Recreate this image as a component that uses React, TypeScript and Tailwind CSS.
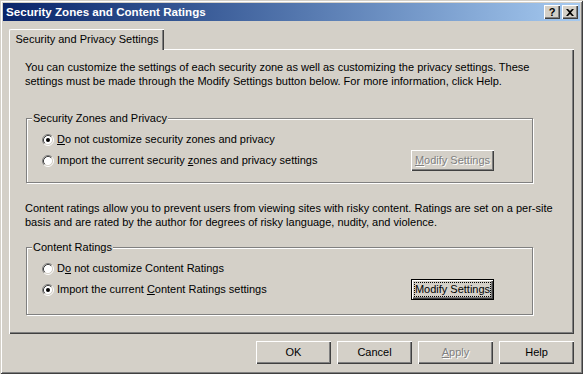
import React from "react";

const font = { fontFamily: '"Liberation Sans", Arial, sans-serif' };

function Radio({ checked }: { checked?: boolean }) {
  return (
    <svg width="12" height="12" viewBox="0 0 12 12" className="shrink-0">
      <circle cx="6" cy="6" r="4.5" fill="#fff" />
      <path d="M2.11 9.89 A5.5 5.5 0 0 1 9.89 2.11" fill="none" stroke="#808080" />
      <path d="M9.89 2.11 A5.5 5.5 0 0 1 2.11 9.89" fill="none" stroke="#fff" />
      <path d="M2.82 9.18 A4.5 4.5 0 0 1 9.18 2.82" fill="none" stroke="#404040" />
      <path d="M9.18 2.82 A4.5 4.5 0 0 1 2.82 9.18" fill="none" stroke="#d4d0c8" />
      {checked && <circle cx="6" cy="6" r="2" fill="#000" />}
    </svg>
  );
}

function RadioRow({ checked, children }: { checked?: boolean; children: React.ReactNode }) {
  return (
    <div className="flex h-[21px] items-center gap-[3px]">
      <Radio checked={checked} />
      <span className="whitespace-nowrap">{children}</span>
    </div>
  );
}

function Button({
  children,
  disabled,
  isDefault,
  className = "",
}: {
  children: React.ReactNode;
  disabled?: boolean;
  isDefault?: boolean;
  className?: string;
}) {
  if (isDefault) {
    return (
      <div
        className={`flex shrink-0 border border-black bg-[#d4d0c8] p-[2px] shadow-[inset_1px_1px_#fff,inset_-1px_-1px_#404040,inset_-2px_-2px_#808080] ${className}`}
      >
        <span className="flex h-full w-full items-center justify-center whitespace-nowrap border border-dotted border-black leading-none">
          {children}
        </span>
      </div>
    );
  }
  return (
    <div
      className={`flex shrink-0 items-center justify-center whitespace-nowrap bg-[#d4d0c8] leading-none shadow-[inset_1px_1px_#fff,inset_-1px_-1px_#404040,inset_-2px_-2px_#808080] ${
        disabled ? "text-[#808080] [text-shadow:1px_1px_0_#fff]" : ""
      } ${className}`}
    >
      {children}
    </div>
  );
}

function Group({
  label,
  className = "",
  children,
}: {
  label: string;
  className?: string;
  children: React.ReactNode;
}) {
  return (
    <div
      className={`relative ml-[16px] w-[507px] border border-[#808080] pl-[15px] pr-[38px] pt-[10px] shadow-[1px_1px_0_#fff,inset_1px_1px_0_#fff] ${className}`}
    >
      <span className="absolute -top-[8px] left-[5px] bg-[#d4d0c8] px-[1px] leading-[14px]">
        {label}
      </span>
      {children}
    </div>
  );
}

export default function App() {
  return (
    <div
      className="flex h-[374px] w-[583px] flex-col bg-[#d4d0c8] p-[3px] text-[11px] text-black shadow-[inset_1px_1px_#d4d0c8,inset_-1px_-1px_#404040,inset_2px_2px_#fff,inset_-2px_-2px_#808080]"
      style={font}
    >
      {/* title bar */}
      <div className="flex h-[18px] items-center bg-gradient-to-r from-[#0a246a] to-[#a6caf0] pl-[3px] pr-[2px]">
        <span className="text-[11.6px] font-bold text-white">Security Zones and Content Ratings</span>
        <div className="ml-auto flex gap-[2px]">
          <Button className="h-[14px] w-[16px] text-[11px] font-bold">?</Button>
          <Button className="h-[14px] w-[16px]">
            <svg width="8" height="7" viewBox="0 0 8 7">
              <path d="M0 0h2l2 2 2-2h2L5 3.5 8 7H6L4 5 2 7H0l3-3.5z" fill="#000" />
            </svg>
          </Button>
        </div>
      </div>

      <div className="flex flex-1 flex-col px-[6px] pt-[8px]">
        {/* tab */}
        <div className="relative z-10 -mb-[1px] flex h-[21px] w-[155px] items-center justify-center rounded-tl-[2px] border-l border-t border-white bg-[#d4d0c8] pb-[1px] shadow-[inset_-1px_0_#404040,inset_-2px_0_#808080]">
          Security and Privacy Settings
        </div>

        {/* panel */}
        <div className="flex h-[285px] flex-col border-l border-t border-white pt-[10px] shadow-[inset_-1px_-1px_#404040,inset_-2px_-2px_#808080]">
          <p className="ml-[15px] whitespace-nowrap leading-[14px]">
            You can customize the settings of each security zone as well as customizing the privacy settings. These
            <br />
            settings must be made through the Modify Settings button below. For more information, click Help.
          </p>

          <Group label="Security Zones and Privacy" className="mt-[30px] h-[65px]">
            <RadioRow checked>
              <u>D</u>o not customize security zones and privacy
            </RadioRow>
            <div className="flex items-center">
              <RadioRow>
                Import the current security <u>z</u>ones and privacy settings
              </RadioRow>
              <Button disabled className="ml-auto h-[21px] w-[83px]">
                <span>
                  <u>M</u>odify Settings
                </span>
              </Button>
            </div>
          </Group>

          <p className="ml-[15px] mt-[18px] whitespace-nowrap leading-[14px]">
            Content ratings allow you to prevent users from viewing sites with risky content. Ratings are set on a per-site
            <br />
            basis and are rated by the author for degrees of risky language, nudity, and violence.
          </p>

          <Group label="Content Ratings" className="mt-[18px] h-[68px]">
            <RadioRow>
              D<u>o</u> not customize Content Ratings
            </RadioRow>
            <div className="flex items-center">
              <RadioRow checked>
                Import the current <u>C</u>ontent Ratings settings
              </RadioRow>
              <Button isDefault className="ml-auto h-[21px] w-[83px]">
                Modify Settings
              </Button>
            </div>
          </Group>
        </div>

        {/* dialog buttons */}
        <div className="mt-[7px] flex justify-end gap-[6px]">
          <Button className="h-[23px] w-[75px]">OK</Button>
          <Button className="h-[23px] w-[75px]">Cancel</Button>
          <Button disabled className="h-[23px] w-[75px]">
            <span>
              <u>A</u>pply
            </span>
          </Button>
          <Button className="h-[23px] w-[75px]">Help</Button>
        </div>
      </div>
    </div>
  );
}
